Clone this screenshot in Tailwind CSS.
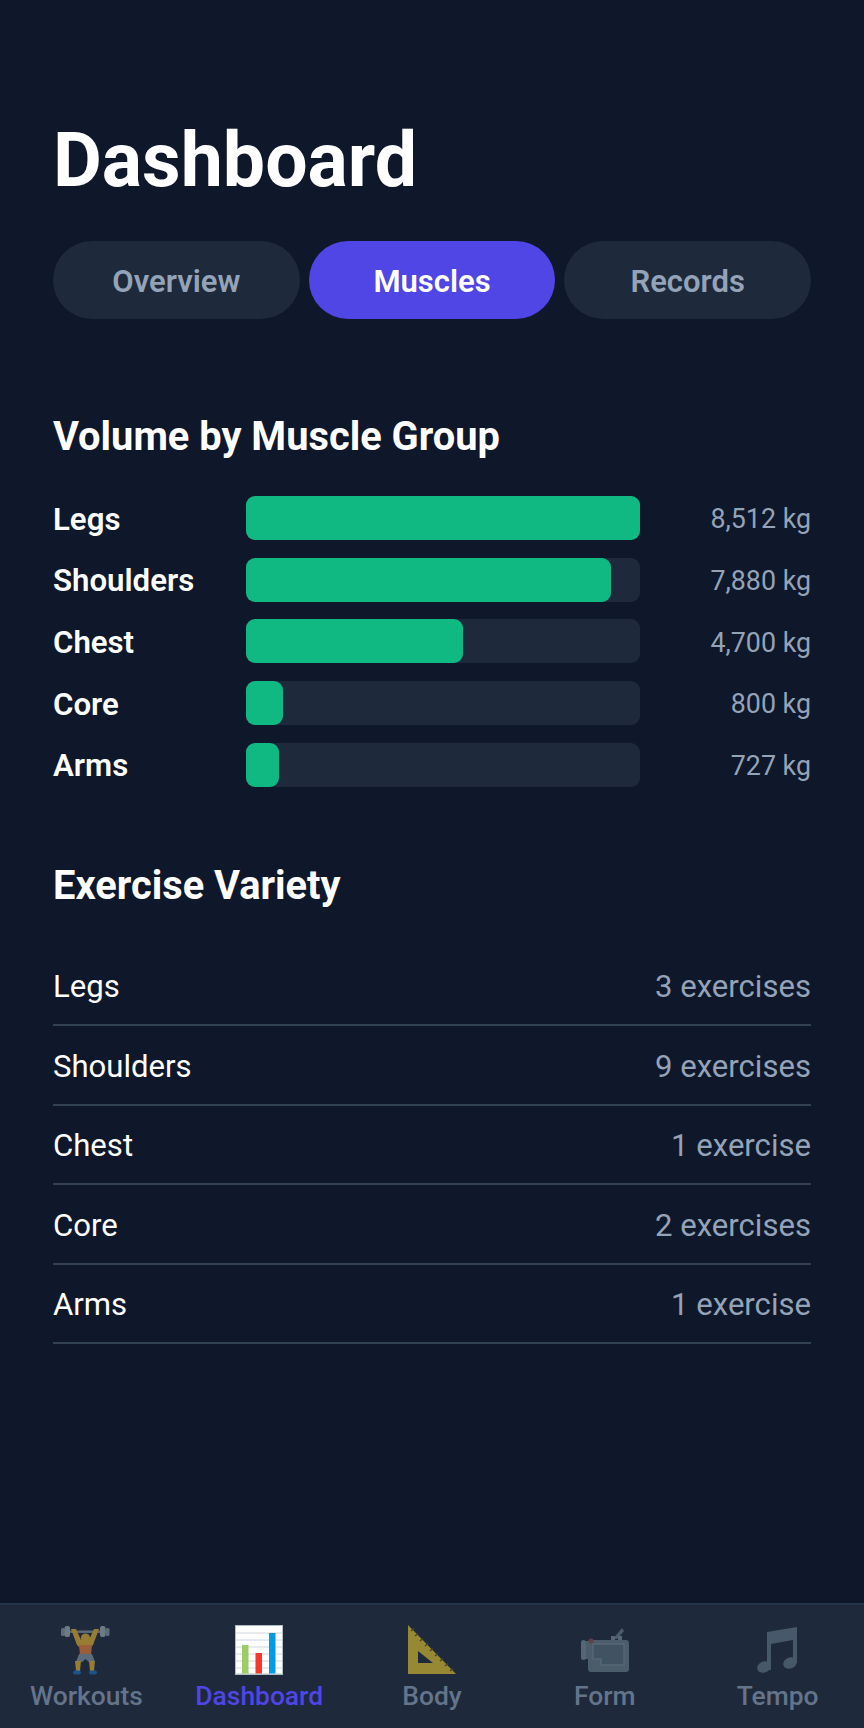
<!DOCTYPE html>
<html lang="en">
<head>
    <meta charset="UTF-8">
    <meta name="viewport" content="width=device-width, initial-scale=1.0">
    <title>Dashboard</title>
    <script src="https://cdn.jsdelivr.net/npm/@tailwindcss/browser@4"></script>
</head>
<body class="bg-[#0f172a] font-['Roboto',sans-serif]">
    <div class="flex flex-col h-[1728px] w-[864px] overflow-hidden">
        <main class="flex-1 px-[53px] pt-[120px]">
            <h1 class="h-[80px] leading-[80px] text-[75.2px] font-bold text-white">Dashboard</h1>

            <div class="mt-[41px] flex gap-[9px]">
                <div class="flex-1 h-[78px] rounded-full bg-[#1e293b] flex items-center justify-center pt-[5px] text-[31px] font-semibold text-[#94a3b8]">Overview</div>
                <div class="flex-1 h-[78px] rounded-full bg-[#4f46e5] flex items-center justify-center pt-[5px] text-[31px] font-semibold text-white">Muscles</div>
                <div class="flex-1 h-[78px] rounded-full bg-[#1e293b] flex items-center justify-center pt-[5px] text-[31px] font-semibold text-[#94a3b8]">Records</div>
            </div>

            <h2 class="mt-[96px] h-[44px] leading-[44px] text-[39.8px] font-bold text-white">Volume by Muscle Group</h2>

            <div class="mt-[37px] flex flex-col gap-[17.7px]">
                <div class="flex items-center h-[44px]">
                    <div class="w-[193px] pt-[4px] text-[31.2px] font-semibold text-white">Legs</div>
                    <div class="w-[394px] h-[44px] rounded-[9px] bg-[#1e293b]"><div class="h-full rounded-[9px] bg-[#10b981] w-full"></div></div>
                    <div class="flex-1 pt-[3px] text-right text-[26.8px] text-[#94a3b8]">8,512 kg</div>
                </div>
                <div class="flex items-center h-[44px]">
                    <div class="w-[193px] pt-[4px] text-[31.2px] font-semibold text-white">Shoulders</div>
                    <div class="w-[394px] h-[44px] rounded-[9px] bg-[#1e293b]"><div class="h-full rounded-[9px] bg-[#10b981] w-[92.6%]"></div></div>
                    <div class="flex-1 pt-[3px] text-right text-[26.8px] text-[#94a3b8]">7,880 kg</div>
                </div>
                <div class="flex items-center h-[44px]">
                    <div class="w-[193px] pt-[4px] text-[31.2px] font-semibold text-white">Chest</div>
                    <div class="w-[394px] h-[44px] rounded-[9px] bg-[#1e293b]"><div class="h-full rounded-[9px] bg-[#10b981] w-[55.2%]"></div></div>
                    <div class="flex-1 pt-[3px] text-right text-[26.8px] text-[#94a3b8]">4,700 kg</div>
                </div>
                <div class="flex items-center h-[44px]">
                    <div class="w-[193px] pt-[4px] text-[31.2px] font-semibold text-white">Core</div>
                    <div class="w-[394px] h-[44px] rounded-[9px] bg-[#1e293b]"><div class="h-full rounded-[9px] bg-[#10b981] w-[9.4%]"></div></div>
                    <div class="flex-1 pt-[3px] text-right text-[26.8px] text-[#94a3b8]">800 kg</div>
                </div>
                <div class="flex items-center h-[44px]">
                    <div class="w-[193px] pt-[4px] text-[31.2px] font-semibold text-white">Arms</div>
                    <div class="w-[394px] h-[44px] rounded-[9px] bg-[#1e293b]"><div class="h-full rounded-[9px] bg-[#10b981] w-[8.5%]"></div></div>
                    <div class="flex-1 pt-[3px] text-right text-[26.8px] text-[#94a3b8]">727 kg</div>
                </div>
            </div>

            <h2 class="mt-[77px] h-[44px] leading-[44px] text-[39.8px] font-bold text-white">Exercise Variety</h2>

            <div class="mt-[39px]">
                <div class="flex items-center justify-between h-[79.5px] pt-[4px] border-b-[2.5px] border-[#334155] text-[31.1px]"><span class="text-white">Legs</span><span class="text-[#94a3b8]">3 exercises</span></div>
                <div class="flex items-center justify-between h-[79.5px] pt-[4px] border-b-[2.5px] border-[#334155] text-[31.1px]"><span class="text-white">Shoulders</span><span class="text-[#94a3b8]">9 exercises</span></div>
                <div class="flex items-center justify-between h-[79.5px] pt-[4px] border-b-[2.5px] border-[#334155] text-[31.1px]"><span class="text-white">Chest</span><span class="text-[#94a3b8]">1 exercise</span></div>
                <div class="flex items-center justify-between h-[79.5px] pt-[4px] border-b-[2.5px] border-[#334155] text-[31.1px]"><span class="text-white">Core</span><span class="text-[#94a3b8]">2 exercises</span></div>
                <div class="flex items-center justify-between h-[79.5px] pt-[4px] border-b-[2.5px] border-[#334155] text-[31.1px]"><span class="text-white">Arms</span><span class="text-[#94a3b8]">1 exercise</span></div>
            </div>
        </main>

        <!-- bottom tabs -->
        <nav class="h-[125px] bg-[#1e293b] border-t-2 border-[#263449] flex">
            <div class="flex-1 flex flex-col items-center pt-[20px]">
                <svg class="w-[50px] h-[50px] opacity-[0.55]" viewBox="0 0 50 50">
                    <rect x="3" y="5.5" width="44" height="2.4" fill="#90a4ae"/>
                    <rect x="0" y="3" width="4" height="8" rx="1.5" fill="#90a4ae"/>
                    <rect x="3.5" y="1" width="5.5" height="11" rx="2" fill="#b0bec5"/>
                    <rect x="39" y="1" width="5.5" height="11" rx="2" fill="#b0bec5"/>
                    <rect x="44.5" y="3" width="4" height="8" rx="1.5" fill="#90a4ae"/>
                    <path d="M10 4h5l5 11h8l5-11h5l-6 16-2 2H18l-2-2z" fill="#fbc02d"/>
                    <circle cx="24.5" cy="13" r="4.6" fill="#fbc02d"/>
                    <path d="M18 20h13l-1 10H19z" fill="#ff8a3a"/>
                    <path d="M18 29h13l3 8h-6l-3.500-3-3.500 3h-6z" fill="#90a4ae"/>
                    <path d="M14 36h6l-1 10h-4zM28 36h6l-1 10h-4z" fill="#fbc02d"/>
                    <rect x="12" y="45.500" width="8" height="4" rx="2" fill="#1976d2"/>
                    <rect x="28" y="45.500" width="8" height="4" rx="2" fill="#1976d2"/>
                </svg>
                <span class="mt-[5px] text-[26.4px] leading-[32px] font-medium text-[#64748b]">Workouts</span>
            </div>
            <div class="flex-1 flex flex-col items-center pt-[20px]">
                <svg class="w-[50px] h-[50px]" viewBox="0 0 50 50">
                    <rect x="1" y="0" width="48" height="50" fill="#b0bec5"/>
                    <rect x="2" y="1" width="46" height="47.500" fill="#ffffff"/>
                    <path d="M2 8h46M2 15h46M2 22h46M2 29h46M2 36h46M2 43h46" stroke="#cfd8dc" stroke-width="1"/>
                    <rect x="8" y="20" width="6.500" height="28.500" fill="#9ccc65"/>
                    <rect x="21.500" y="28" width="6.500" height="20.500" fill="#f4392b"/>
                    <rect x="35" y="8" width="6.500" height="40.500" fill="#039be5"/>
                </svg>
                <span class="mt-[5px] text-[26.4px] leading-[32px] font-medium text-[#4f46e5]">Dashboard</span>
            </div>
            <div class="flex-1 flex flex-col items-center pt-[20px]">
                <svg class="w-[50px] h-[50px] opacity-[0.55]" viewBox="0 0 50 50">
                    <path fill-rule="evenodd" d="M1 0L49 49H1zM11 26v12h15z" fill="#fbd62f"/>
                    <path d="M4 6l3-2.500M8 11l3-2.500M13 16l3-2.500M18 21l3-2.500M23 26l3-2.500M28 31l3-2.500M33 36l3-2.500M38 41l3-2.500M43 46l3-2.500" stroke="#6d5a1f" stroke-width="1.600"/>
                </svg>
                <span class="mt-[5px] text-[26.4px] leading-[32px] font-medium text-[#64748b]">Body</span>
            </div>
            <div class="flex-1 flex flex-col items-center pt-[20px]">
                <svg class="w-[50px] h-[50px] opacity-50" viewBox="0 0 50 50">
                    <path d="M33 14l9-11 2 3-7 8z" fill="#78909c"/>
                    <rect x="31" y="11" width="4" height="4" fill="#90a4ae"/>
                    <rect x="38" y="11" width="4" height="4" fill="#90a4ae"/>
                    <rect x="1" y="15" width="5" height="20" rx="2.500" fill="#90a4ae"/>
                    <rect x="6" y="16" width="6" height="18" fill="#78909c"/>
                    <rect x="8" y="15" width="41" height="32" rx="3" fill="#78909c"/>
                    <path d="M13 19h31v21H21v-6h-8z" fill="#607d8b" stroke="#90a4ae" stroke-width="1.400"/>
                    <circle cx="11" cy="16" r="2.600" fill="#a85a5a"/>
                </svg>
                <span class="mt-[5px] text-[26.4px] leading-[32px] font-medium text-[#64748b]">Form</span>
            </div>
            <div class="flex-1 flex flex-col items-center pt-[20px]">
                <svg class="w-[50px] h-[50px] opacity-50" viewBox="0 0 50 50">
                    <path d="M14 7L44 2v36h-4V15l-22 4v26h-4z" fill="#6f8797"/>
                    <ellipse cx="11" cy="42" rx="7" ry="5.500" fill="#6f8797" transform="rotate(-25 11 42)"/>
                    <ellipse cx="37" cy="38" rx="7" ry="5.500" fill="#6f8797" transform="rotate(-25 37 38)"/>
                </svg>
                <span class="mt-[5px] text-[26.4px] leading-[32px] font-medium text-[#64748b]">Tempo</span>
            </div>
        </nav>
    </div>
</body>
</html>
